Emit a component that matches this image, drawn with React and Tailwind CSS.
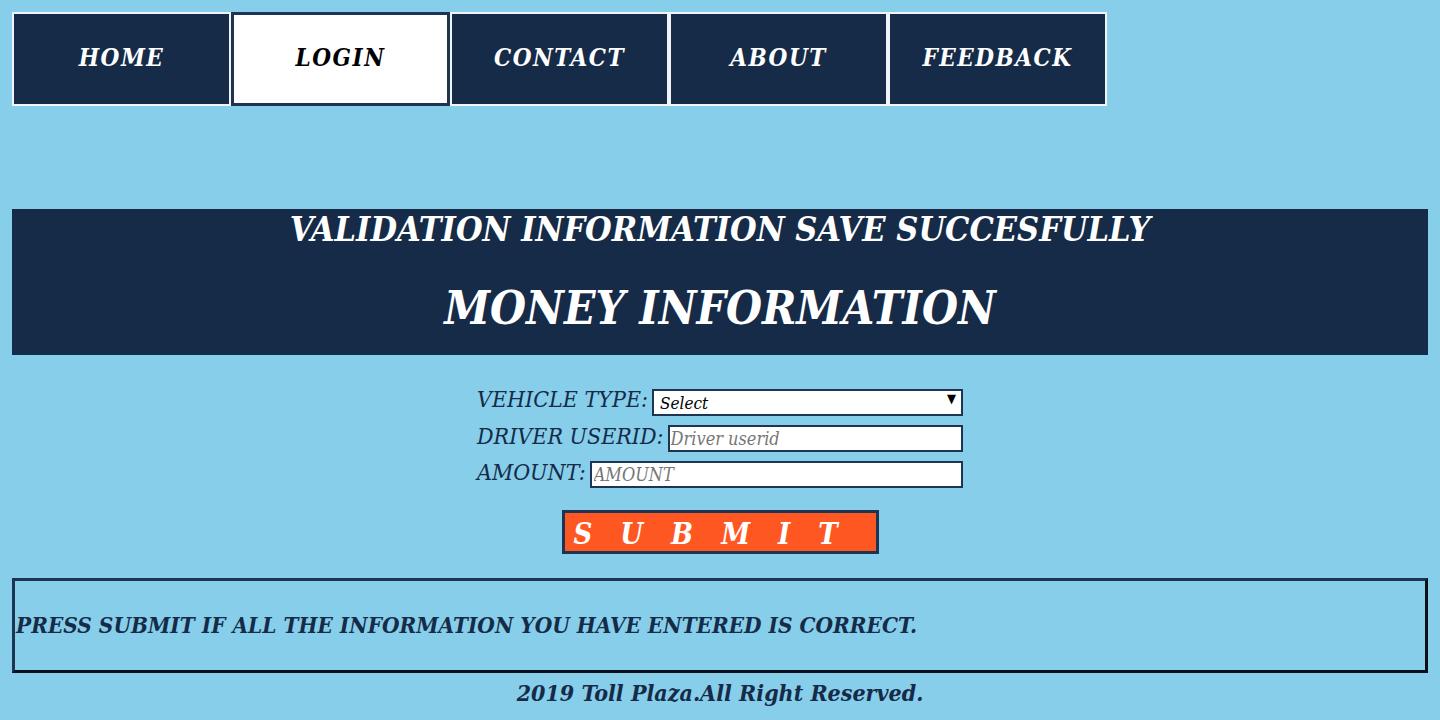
import { useState } from "react";

const NAV = ["HOME", "LOGIN", "CONTACT", "ABOUT", "FEEDBACK"];

export default function App() {
  const [active] = useState("LOGIN");
  const [vehicle, setVehicle] = useState("");
  const [userid, setUserid] = useState("");
  const [amount, setAmount] = useState("");

  return (
    <div className="min-h-[720px] w-full bg-[#87ceeb] font-['DejaVu_Serif',serif] font-stretch-condensed italic text-[#152b48]">
      {/* Barra de navegación */}
      <nav className="flex pl-3 pt-3">
        {NAV.map((item) =>
          item === active ? (
            <a
              key={item}
              href="#"
              className="flex h-[94px] w-[219px] items-center justify-center border-[3px] border-[#1d3553] bg-white pb-[2px] text-[24px] font-bold tracking-[1.5px] text-black"
            >
              {item}
            </a>
          ) : (
            <a
              key={item}
              href="#"
              className="flex h-[94px] w-[219px] items-center justify-center border-2 border-[#f0f4f8] bg-[#152b48] pb-[2px] text-[24px] font-bold tracking-[1.5px] text-white"
            >
              {item}
            </a>
          )
        )}
      </nav>

      {/* Cabecera */}
      <header className="mx-3 mt-[103px] flex h-[146px] flex-col items-center bg-[#152b48] text-white">
        <h2 className="mt-[-5px] text-[34px] font-bold leading-[50px]">
          VALIDATION INFORMATION SAVE SUCCESFULLY
        </h2>
        <h1 className="mt-[24px] text-[46px] font-bold leading-[60px]">
          MONEY INFORMATION
        </h1>
      </header>

      {/* Formulario */}
      <form className="mt-[33px] flex flex-col items-center text-[23px]">
        <div className="flex h-[27px] w-[486px] items-center">
          <label className="mb-[4px] mr-[4px] whitespace-nowrap">VEHICLE TYPE:</label>
          <div className="relative flex-1">
            <select
              value={vehicle}
              onChange={(e) => setVehicle(e.target.value)}
              className="h-[27px] w-full appearance-none border-2 border-[#1d3553] bg-white pl-[6px] text-[17px] text-black"
            >
              <option value="">Select</option>
              <option value="car">Car</option>
              <option value="truck">Truck</option>
              <option value="bus">Bus</option>
            </select>
            <span className="pointer-events-none absolute right-[7px] top-[5px] text-[13px] not-italic text-black">
              ▼
            </span>
          </div>
        </div>
        <div className="mt-[10px] flex h-[27px] w-[486px] items-center">
          <label className="mb-[4px] mr-[4px] whitespace-nowrap">DRIVER USERID:</label>
          <input
            value={userid}
            onChange={(e) => setUserid(e.target.value)}
            placeholder="Driver userid"
            className="h-[27px] min-w-0 flex-1 border-2 border-[#1d3553] bg-white pl-[1px] text-[18px] text-black placeholder:text-[#767676]"
          />
        </div>
        <div className="mt-[9px] flex h-[27px] w-[486px] items-center">
          <label className="mb-[4px] mr-[4px] whitespace-nowrap">AMOUNT:</label>
          <input
            value={amount}
            onChange={(e) => setAmount(e.target.value)}
            placeholder="AMOUNT"
            className="h-[27px] min-w-0 flex-1 border-2 border-[#1d3553] bg-white pl-[2px] text-[18px] text-black placeholder:text-[#767676]"
          />
        </div>
        <button
          type="button"
          className="mt-[22px] h-[44px] w-[317px] border-[3px] border-[#1d3553] bg-[#ff5722] pl-[9px] text-left text-[29px] font-bold tracking-[28px] text-white"
        >
          SUBMIT
        </button>
      </form>

      {/* Aviso */}
      <div className="mx-3 mt-[24px] flex h-[95px] items-center border-[3px] border-t-[#1d3553] border-l-[#1d3553] border-r-[#0a0f18] border-b-[#0a0f18] pl-[1px] text-[22.4px] font-bold">
        PRESS SUBMIT IF ALL THE INFORMATION YOU HAVE ENTERED IS CORRECT.
      </div>

      <footer className="mt-[3px] text-center text-[23px] font-bold">
        2019 Toll Plaza.All Right Reserved.
      </footer>
    </div>
  );
}
